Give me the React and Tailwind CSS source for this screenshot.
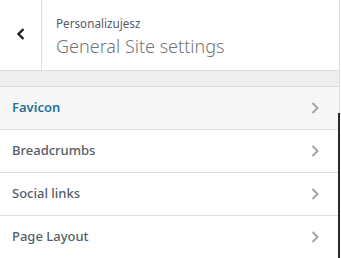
import React from 'react';

const items = [
  { label: 'Favicon', active: true },
  { label: 'Breadcrumbs' },
  { label: 'Social links' },
  { label: 'Page Layout' },
];

const Chevron = ({ className }) => (
  <svg viewBox="0 0 8 12" className={className} fill="none" stroke="currentColor" strokeWidth="2">
    <path d="M1.5 1l5 5-5 5" />
  </svg>
);

const App = () => {
  return (
    <div
      className="relative w-[341px] h-[258px] overflow-hidden bg-white text-[#555d66]"
      style={{ fontFamily: '"Noto Sans", "Open Sans", sans-serif' }}
    >
      <div className="w-[340px] h-full border-r border-[#dddddd] bg-white">
        {/* header */}
        <div className="flex h-[71px] border-b border-[#dddddd]">
          <button className="w-[42px] h-full flex items-center justify-center border-r border-[#dddddd] text-[#1d2327]">
            <svg viewBox="0 0 8 12" className="w-[8px] h-[12px] -mt-[2px]" fill="none" stroke="currentColor" strokeWidth="2.4">
              <path d="M6.5 1l-5 5 5 5" />
            </svg>
          </button>
          <div className="pl-[14px] pt-[15px]">
            <div className="text-[11.7px] leading-[16px] text-[#555d66]">Personalizujesz</div>
            <div className="text-[18px] leading-[26px] font-light text-[#72777c] mt-[2px]">General Site settings</div>
          </div>
        </div>

        {/* spacer band */}
        <div className="h-[16px] bg-[#eeeeee] border-b border-[#dddddd]" />

        <ul>
          {items.map((item) => (
            <li
              key={item.label}
              className={
                item.active
                  ? 'flex items-center justify-between h-[43px] pl-[12px] pr-[20px] border-b border-[#dddddd] bg-[#f7f7f7]'
                  : 'flex items-center justify-between h-[43px] pl-[12px] pr-[20px] border-b border-[#dddddd] bg-white'
              }
            >
              <span
                className={
                  item.active
                    ? 'text-[13px] font-semibold text-[#23709b]'
                    : 'text-[13px] font-medium text-[#555d66]'
                }
              >
                {item.label}
              </span>
              <Chevron className="w-[8px] h-[12px] text-[#a0a5aa]" />
            </li>
          ))}
        </ul>
      </div>
      <div className="absolute right-[1px] top-[113px] bottom-0 w-[2px] bg-[#2a2a2a]" />
    </div>
  );
};

export default App;
